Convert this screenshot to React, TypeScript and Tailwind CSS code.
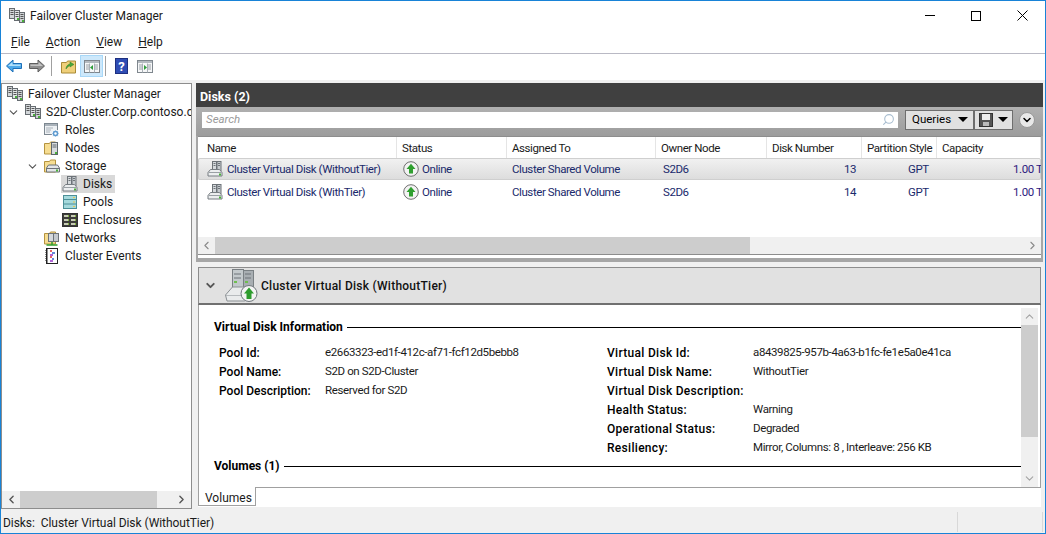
import { ChevronDown, ChevronLeft, ChevronRight, ChevronUp, Search } from "lucide-react";

const ClusterIcon = ({ size = 16 }: { size?: number }) => (
  <svg width={size} height={size} viewBox="0 0 16 16" className="shrink-0">
    <rect x=".5" y=".5" width="5" height="10" fill="#d3d7da" stroke="#666c71" />
    <rect x="5.500" y="2.500" width="5" height="10" fill="#e2e5e7" stroke="#666c71" />
    <rect x="10.500" y="4.500" width="5" height="10" fill="#cdd1d4" stroke="#666c71" />
    <path d="M1.500 2.500h3M1.500 4.500h3M1.500 6.500h3M6.500 4.500h3M6.500 6.500h3M6.500 8.500h3M11.500 6.500h3M11.500 8.500h3M11.500 10.500h3" stroke="#555" />
    <rect x="8" y="10" width="2" height="2" fill="#49b03a" />
    <rect x="13" y="12" width="2" height="2" fill="#49b03a" />
  </svg>
);

const FolderBack = ({ children }: { children: React.ReactNode }) => (
  <svg width="16" height="16" viewBox="0 0 16 16" className="shrink-0">
    <path d="M.5 3.500h5l1-1.500h5v12H.5z" fill="#f6dd92" stroke="#b4933f" />
    {children}
  </svg>
);

const RolesIcon = () => (
  <svg width="16" height="16" viewBox="0 0 16 16" className="shrink-0">
    <rect x=".5" y="1.500" width="13" height="11" fill="#eef1f4" stroke="#7c8790" />
    <rect x="1" y="2" width="12" height="2" fill="#a9b2ba" />
    <path d="M2 6h7M2 8h5M2 10h4" stroke="#a9b2ba" />
    <circle cx="11.500" cy="11.500" r="3.500" fill="#5f9bd0" stroke="#fff" />
    <circle cx="11.500" cy="11.500" r="1.200" fill="#fff" />
  </svg>
);

const NodesIcon = () => (
  <FolderBack>
    <rect x="7.500" y="2.500" width="6" height="12" fill="#d8dcdf" stroke="#5f666b" />
    <path d="M8.500 5h4M8.500 7h4" stroke="#5f666b" />
    <rect x="11" y="12" width="2" height="2" fill="#49b03a" />
  </FolderBack>
);

const StorageIcon = () => (
  <FolderBack>
    <path d="M2.500 10l2-3h9l2 3v4h-13z" fill="#e3e5e7" stroke="#6d7378" />
    <path d="M3 10.500h12" stroke="#6d7378" />
    <rect x="12" y="11.500" width="2" height="2" fill="#49b03a" />
  </FolderBack>
);

const DiskIcon = () => (
  <svg width="16" height="16" viewBox="0 0 16 16" className="shrink-0">
    <rect x="5.500" y=".5" width="4" height="9" fill="#d5d9dc" stroke="#6d7378" />
    <rect x="10" y=".5" width="4" height="9" fill="#c5cace" stroke="#6d7378" />
    <path d="M6.500 2.500h2M6.500 4.500h2M11 2.500h2M11 4.500h2" stroke="#6d7378" />
    <path d="M1 11.500l2.500-3h9L15 11.500V15H1z" fill="#eceeef" stroke="#777d82" />
    <path d="M1.500 11.500h13" stroke="#9aa0a5" />
    <rect x="12" y="12.500" width="2" height="2" fill="#49b03a" />
  </svg>
);

const PoolsIcon = () => (
  <svg width="14" height="14" viewBox="0 0 14 14" className="shrink-0">
    <rect x=".5" y=".5" width="13" height="13" fill="#a5d9dc" stroke="#4c8f97" />
    <path d="M1 4.500h12M1 9h12" stroke="#4c8f97" />
    <path d="M10 2.500h2M10 7h2M10 11.500h2" stroke="#e9c64c" />
  </svg>
);

const EnclosuresIcon = () => (
  <svg width="16" height="14" viewBox="0 0 16 14" className="shrink-0">
    <rect x=".5" y=".5" width="15" height="13" fill="#3d3d3a" stroke="#333" />
    <path d="M2 3h5M2 7h5M2 11h5M9 3h5M9 7h5M9 11h5" stroke="#c7cbb6" strokeWidth="2" />
    <path d="M6 3h1M6 7h1M6 11h1M13 3h1M13 7h1M13 11h1" stroke="#83b53e" strokeWidth="2" />
  </svg>
);

const NetworksIcon = () => (
  <FolderBack>
    <rect x="4.500" y="3.500" width="5" height="8" fill="#d5d9dc" stroke="#6d7378" />
    <rect x="9.500" y="3.500" width="5" height="8" fill="#c5cace" stroke="#6d7378" />
    <path d="M2.500 15h11M8 12v3" stroke="#32a02c" strokeWidth="1.500" />
  </FolderBack>
);

const EventsIcon = () => (
  <svg width="16" height="16" viewBox="0 0 16 16" className="shrink-0">
    <rect x="2.500" y=".5" width="11" height="15" fill="#fff" stroke="#222" />
    <path d="M2 2v12M3.500 1.500v13" stroke="#222" strokeDasharray="1 1" />
    <path d="M6 3h2M6 9h2" stroke="#d33" strokeWidth="1.500" />
    <path d="M8 5h3M8 11h2" stroke="#36c" strokeWidth="1.500" />
    <path d="M6 7h3M6 13h3" stroke="#93c" strokeWidth="1.500" />
  </svg>
);

const OnlineIcon = () => (
  <svg width="16" height="16" viewBox="0 0 16 16" className="shrink-0">
    <circle cx="8" cy="8" r="7.300" fill="#f3f3f3" stroke="#6f6f6f" />
    <path d="M8 2.800L12.500 8H10v4.500H6V8H3.500z" fill="#2f9f2f" />
  </svg>
);

const BigDisk = () => (
  <svg width="33" height="33" viewBox="0 0 33 33">
    <rect x="7.500" y=".5" width="11" height="21" fill="#c3c9cc" stroke="#7a8084" />
    <rect x="18.500" y="1.500" width="10" height="21" fill="#a8aeb2" stroke="#7a8084" />
    <path d="M9 5h7M9 9h7M20 5h6M20 9h6" stroke="#6d7378" />
    <rect x="9" y="12" width="3" height="2" fill="#6fbf4f" />
    <rect x="20" y="12" width="3" height="2" fill="#6fbf4f" />
    <path d="M.5 26l7-8h18v10l-6 4H2z" fill="#e9ebec" stroke="#8a8f93" />
    <path d="M1 26.500h20" stroke="#b7bbbe" />
    <circle cx="24" cy="24.500" r="8" fill="#f4f4f4" stroke="#70777c" />
    <path d="M24 18.500L29 24.500H26.500V30H21.500V24.500H19z" fill="#2e9c2e" />
  </svg>
);

const BackArrow = () => (
  <svg width="16" height="14" viewBox="0 0 16 14">
    <path d="M.5 7L7 1v3.500h8.500v5H7V13z" fill="#4da9ea" stroke="#1c6fb8" />
    <path d="M2 7l4.500-4v2.500h8V7z" fill="#b2e0fa" />
  </svg>
);

const ForwardArrow = () => (
  <svg width="16" height="14" viewBox="0 0 16 14">
    <path d="M15.500 7L9 1v3.500H.5v5H9V13z" fill="#8f8f8f" stroke="#5f5f5f" />
    <path d="M14 7L9.500 3v2.500h-8V7z" fill="#c4c4c4" />
  </svg>
);

const UpFolder = () => (
  <svg width="16" height="16" viewBox="0 0 16 16">
    <path d="M.5 4.500h5l1-1.500h8v12H.5z" fill="#efcf79" stroke="#a98a36" />
    <path d="M5 11c0-3 2-4.500 4-5V4l4 2.500-1 .5-3 2V7.500C7.500 8 6 9.500 5 11z" fill="#49a83a" stroke="#2f7d28" strokeWidth=".5" />
  </svg>
);

const PaneIcon = ({ right = false }: { right?: boolean }) => (
  <svg width="16" height="13" viewBox="0 0 16 13">
    <rect x=".5" y=".5" width="15" height="12" fill="#f6f7f8" stroke="#7f878e" />
    <rect x="1" y="1" width="14" height="2" fill="#b4bac0" />
    <path d="M2 5h3M2 7h3M2 9h3M11 5h3M11 7h3M11 9h3" stroke="#9aa1a7" />
    <path d="M5.500 3.500v9M10.500 3.500v9" stroke="#a9b0b6" />
    <path d={right ? "M7 5L10 7.500 7 10z" : "M9 5L6 7.500 9 10z"} fill="#2f9d3b" />
  </svg>
);

const TreeRow = ({
  indent,
  icon,
  label,
  open = false,
  selected = false,
}: {
  indent: string;
  icon: React.ReactNode;
  label: string;
  open?: boolean;
  selected?: boolean;
}) => (
  <div className={`flex h-[18px] items-center whitespace-nowrap ${indent}`}>
    <div className="mr-[4px] flex w-[16px] shrink-0 justify-center">
      {open && <ChevronDown size={13} strokeWidth={2} className="text-[#555]" />}
    </div>
    <div className={`flex h-[18px] items-center gap-[5px] pr-[3px] ${selected ? "ml-[-1px] bg-[#d9d9d9] pl-[1px]" : ""}`}>
      <div className="flex w-[16px] shrink-0 justify-center">{icon}</div>
      <span>{label}</span>
    </div>
  </div>
);

const columns = [
  { label: "Name", w: "w-[199px] pl-[9px]" },
  { label: "Status", w: "w-[110px] pl-[5px]" },
  { label: "Assigned To", w: "w-[149px] pl-[5px]" },
  { label: "Owner Node", w: "w-[111px] pl-[5px]" },
  { label: "Disk Number", w: "w-[95px] pl-[5px]" },
  { label: "Partition Style", w: "w-[75px] pl-[5px]" },
  { label: "Capacity", w: "flex-1 pl-[5px]" },
];

const rows = [
  { name: "Cluster Virtual Disk (WithoutTier)", number: 13, selected: true },
  { name: "Cluster Virtual Disk (WithTier)", number: 14, selected: false },
];

const leftInfo = [
  ["Pool Id:", "e2663323-ed1f-412c-af71-fcf12d5bebb8"],
  ["Pool Name:", "S2D on S2D-Cluster"],
  ["Pool Description:", "Reserved for S2D"],
];

const rightInfo = [
  ["Virtual Disk Id:", "a8439825-957b-4a63-b1fc-fe1e5a0e41ca"],
  ["Virtual Disk Name:", "WithoutTier"],
  ["Virtual Disk Description:", ""],
  ["Health Status:", "Warning"],
  ["Operational Status:", "Degraded"],
  ["Resiliency:", "Mirror, Columns: 8 , Interleave: 256 KB"],
];

const InfoRow = ({ label, value, labelW }: { label: string; value: string; labelW: string }) => (
  <div className="flex h-[19px] items-center whitespace-nowrap">
    <span className={`${labelW} shrink-0 font-medium text-black`}>{label}</span>
    <span className="text-[11.500px] tracking-[-0.38px]">{value}</span>
  </div>
);

const SectionTitle = ({ label }: { label: string }) => (
  <div className="flex items-center gap-[4px] whitespace-nowrap">
    <span className="font-bold text-black">{label}</span>
    <div className="h-px flex-1 bg-black" />
  </div>
);

export default function App() {
  return (
    <div className="flex h-[534px] w-[1046px] flex-col overflow-hidden border border-[#1883d7] bg-white font-['Roboto',sans-serif] text-[12px] leading-none text-[#1a1a1a]">
      {/* title bar */}
      <div className="flex h-[29px] shrink-0 items-center pl-[8px]">
        <ClusterIcon />
        <span className="ml-[5px]">Failover Cluster Manager</span>
        <div className="ml-auto flex items-center">
          <div className="flex h-[29px] w-[46px] items-center justify-center">
            <div className="h-px w-[10px] bg-black" />
          </div>
          <div className="flex h-[29px] w-[46px] items-center justify-center">
            <div className="h-[10px] w-[10px] border border-black" />
          </div>
          <div className="flex h-[29px] w-[46px] items-center justify-center">
            <svg width="11" height="11" viewBox="0 0 11 11">
              <path d="M.5.500l10 10M10.500.500l-10 10" stroke="#000" />
            </svg>
          </div>
        </div>
      </div>

      {/* menu */}
      <div className="flex h-[24px] shrink-0 items-center gap-[16px] border-b border-[#b9b9c4] pl-[10px]">
        <span><u>F</u>ile</span>
        <span><u>A</u>ction</span>
        <span><u>V</u>iew</span>
        <span><u>H</u>elp</span>
      </div>

      {/* toolbar */}
      <div className="flex h-[26px] shrink-0 items-center pb-[2px] pl-[5px]">
        <BackArrow />
        <div className="ml-[7px]"><ForwardArrow /></div>
        <div className="ml-[6px] h-[20px] w-px bg-[#a0a0a0]" />
        <div className="ml-[9px]"><UpFolder /></div>
        <div className="ml-[3px] flex h-[22px] w-[23px] items-center justify-center border border-[#a8d8f8] bg-[#cde8fb]">
          <PaneIcon />
        </div>
        <div className="ml-[2px] h-[20px] w-px bg-[#a0a0a0]" />
        <div className="ml-[9px] flex h-[16px] w-[13px] items-center justify-center border border-[#1d2f80] bg-[#2f4db4] text-[13px] font-bold text-white">
          ?
        </div>
        <div className="ml-[9px]"><PaneIcon right /></div>
      </div>

      {/* panes */}
      <div className="flex min-h-0 flex-1 gap-[4px] bg-[#f0f0f0] pt-[3px] pr-[2px] pb-[1px]">
        <div className="flex w-[191px] shrink-0 flex-col border border-[#8d8d8d] bg-white">
          <div className="min-h-0 flex-1 overflow-hidden pt-px pl-[3px]">
            <div className="flex h-[18px] items-center gap-[5px] whitespace-nowrap pl-[2px]">
              <ClusterIcon />
              <span>Failover Cluster Manager</span>
            </div>
            <TreeRow indent="" icon={<ClusterIcon />} label="S2D-Cluster.Corp.contoso.c" open />
            <TreeRow indent="pl-[19px]" icon={<RolesIcon />} label="Roles" />
            <TreeRow indent="pl-[19px]" icon={<NodesIcon />} label="Nodes" />
            <TreeRow indent="pl-[19px]" icon={<StorageIcon />} label="Storage" open />
            <TreeRow indent="pl-[37px]" icon={<DiskIcon />} label="Disks" selected />
            <TreeRow indent="pl-[37px]" icon={<PoolsIcon />} label="Pools" />
            <TreeRow indent="pl-[37px]" icon={<EnclosuresIcon />} label="Enclosures" />
            <TreeRow indent="pl-[19px]" icon={<NetworksIcon />} label="Networks" />
            <TreeRow indent="pl-[19px]" icon={<EventsIcon />} label="Cluster Events" />
          </div>
          <div className="flex h-[17px] shrink-0 items-center bg-[#f0f0f0]">
            <div className="flex w-[18px] justify-center">
              <ChevronLeft size={13} strokeWidth={2.500} className="text-[#555]" />
            </div>
            <div className="h-full w-[137px] bg-[#cdcdcd]" />
            <div className="flex-1" />
            <div className="flex w-[20px] justify-center">
              <ChevronRight size={13} strokeWidth={2.500} className="text-[#555]" />
            </div>
          </div>
        </div>

        <div className="flex min-w-0 flex-1 flex-col">
          {/* upper */}
          <div className="flex h-[24px] shrink-0 items-center bg-[#404040] pt-[4px] pl-[4px] text-[12.500px] font-bold text-white">
            Disks (2)
          </div>
          <div className="flex h-[29px] shrink-0 items-center bg-gradient-to-b from-[#b0b0b0] to-[#9c9c9c] pb-[4px] pl-[6px]">
            <div className="flex h-[16px] w-[696px] items-center justify-between bg-white pr-[3px] pl-[4px]">
              <span className="text-[11.500px] text-[#9a9a9a] italic">Search</span>
              <Search size={13} className="scale-x-[-1] text-[#a9bed0]" />
            </div>
            <div className="ml-[7px] flex h-[20px] w-[69px] items-center justify-between border border-[#6e6e6e] bg-[#e1e1e1] pr-[5px] pl-[6px] text-[11.500px] text-black">
              <span>Queries</span>
              <div className="h-0 w-0 border-x-[5px] border-t-[5px] border-x-transparent border-t-black" />
            </div>
            <div className="flex h-[20px] w-[39px] items-center justify-between border border-[#6e6e6e] bg-[#e1e1e1] pr-[4px] pl-[4px]">
              <svg width="14" height="14" viewBox="0 0 14 14">
                <rect x=".5" y=".5" width="13" height="13" fill="#555" stroke="#333" />
                <rect x="3" y="1" width="8" height="6" fill="#eee" />
                <rect x="4" y="9" width="6" height="4" fill="#bbb" />
              </svg>
              <div className="h-0 w-0 border-x-[5px] border-t-[5px] border-x-transparent border-t-black" />
            </div>
            <div className="ml-[6px] flex h-[16px] w-[16px] items-center justify-center rounded-full border border-[#999] bg-[#e8e8e8]">
              <ChevronDown size={12} strokeWidth={3} className="text-black" />
            </div>
          </div>
          <div className="shrink-0 bg-[#a6a6a6] px-[2px]">
            <div className="flex h-[119px] flex-col overflow-hidden border-y border-[#8d8d8d] bg-white text-[11.500px] tracking-[-0.42px]">
              <div className="flex h-[21px] shrink-0 items-center">
                {columns.map((c) => (
                  <div key={c.label} className={`flex h-full ${c.w} shrink-0 items-center overflow-hidden border-r border-[#e5e5e5] pt-[3px] whitespace-nowrap`}>
                    {c.label}
                  </div>
                ))}
              </div>
              {rows.map((r) => (
                <div
                  key={r.name}
                  className={`flex h-[22px] shrink-0 items-center whitespace-nowrap text-[#1a2a6c] ${
                    r.selected
                      ? "rounded-[2px] bg-gradient-to-b from-[#f2f2f2] to-[#dcdcdc] shadow-[inset_0_0_0_1px_#cfcfcf]"
                      : "mt-px"
                  }`}
                >
                  <div className="flex w-[199px] shrink-0 items-center gap-[4px] pl-[9px]">
                    <DiskIcon />
                    <span className="pt-[2px]">{r.name}</span>
                  </div>
                  <div className="flex w-[110px] shrink-0 items-center gap-[3px] pl-[6px]">
                    <OnlineIcon />
                    <span className="pt-[2px]">Online</span>
                  </div>
                  <div className="w-[149px] shrink-0 pt-[2px] pl-[5px]">Cluster Shared Volume</div>
                  <div className="w-[111px] shrink-0 pt-[2px] pl-[7px]">S2D6</div>
                  <div className="w-[95px] shrink-0 pt-[2px] pr-[6px] text-right">{r.number}</div>
                  <div className="w-[75px] shrink-0 pt-[2px] pl-[46px]">GPT</div>
                  <div className="min-w-0 flex-1 overflow-hidden pt-[2px] pl-[76px] text-[#2d1a80]">1.00 TB</div>
                </div>
              ))}
              <div className="flex-1" />
              <div className="flex h-[17px] shrink-0 items-center bg-[#f0f0f0]">
                <div className="flex w-[17px] justify-center">
                  <ChevronLeft size={13} strokeWidth={2} className="text-[#8a8a8a]" />
                </div>
                <div className="h-full w-[535px] bg-[#cdcdcd]" />
                <div className="flex-1" />
                <div className="flex w-[17px] justify-center">
                  <ChevronRight size={13} strokeWidth={2} className="text-[#8a8a8a]" />
                </div>
              </div>
            </div>
          </div>

          {/* detail */}
          <div className="h-[3px] shrink-0 border-x-2 border-[#a6a6a6] bg-white" />
          <div className="h-[4px] shrink-0 bg-[#a6a6a6]" />
          <div className="flex min-h-0 flex-1 flex-col bg-[#f0f0f0] px-[2px] pt-[5px]">
            <div className="flex h-[38px] shrink-0 items-center border border-b-2 border-[#8d8d8d] border-b-[#707070] bg-[#e1e1e1] pl-[5px]">
              <ChevronDown size={13} strokeWidth={3.500} className="text-[#555]" />
              <div className="ml-[8px]"><BigDisk /></div>
              <span className="ml-[3px] font-medium tracking-[0.25px] text-[#111]">Cluster Virtual Disk (WithoutTier)</span>
            </div>
            <div className="flex min-h-0 flex-1 flex-col bg-white">
              <div className="flex h-[183px] shrink-0 border-x border-b border-[#a0a0a0]">
                <div className="min-w-0 flex-1 overflow-hidden pt-[16px] pl-[15px]">
                  <SectionTitle label="Virtual Disk Information" />
                  <div className="mt-[10px] flex pl-[5px]">
                    <div className="w-[388px]">
                      {leftInfo.map(([l, v]) => (
                        <InfoRow key={l} label={l} value={v} labelW="w-[106px]" />
                      ))}
                    </div>
                    <div>
                      {rightInfo.map(([l, v]) => (
                        <InfoRow key={l} label={l} value={v} labelW="w-[146px] tracking-[0.3px]" />
                      ))}
                    </div>
                  </div>
                  <div className="mt-[3px]">
                    <SectionTitle label="Volumes (1)" />
                  </div>
                </div>
                <div className="mt-[3px] mr-[2px] flex h-[179px] w-[17px] shrink-0 flex-col items-center bg-[#f0f0f0]">
                  <div className="flex h-[17px] items-center">
                    <ChevronUp size={13} className="text-[#a3a3a3]" />
                  </div>
                  <div className="h-[112px] w-full bg-[#cdcdcd]" />
                  <div className="flex-1" />
                  <div className="flex h-[17px] items-center">
                    <ChevronDown size={13} className="text-[#a3a3a3]" />
                  </div>
                </div>
              </div>
              <div className="flex h-[19px] shrink-0">
                <div className="mt-[-1px] flex h-[19px] w-[58px] items-center border-x border-b border-[#a0a0a0] border-t-white bg-white pt-[3px] pl-[6px]">
                  Volumes
                </div>
              </div>
              <div className="flex-1 bg-[#f0f0f0]" />
            </div>
          </div>
        </div>
      </div>

      {/* status bar */}
      <div className="flex h-[23px] shrink-0 items-center bg-[#f0f0f0] pl-[2px]">
        <span className="w-[954px] shrink-0 whitespace-nowrap pt-[2px] tracking-[-0.05px]">Disks:&nbsp; Cluster Virtual Disk (WithoutTier)</span>
        <div className="h-[20px] w-px bg-[#d8d8d8]" />
        <div className="flex-1" />
        <div className="mr-[2px] h-[20px] w-px bg-[#d8d8d8]" />
      </div>
    </div>
  );
}
